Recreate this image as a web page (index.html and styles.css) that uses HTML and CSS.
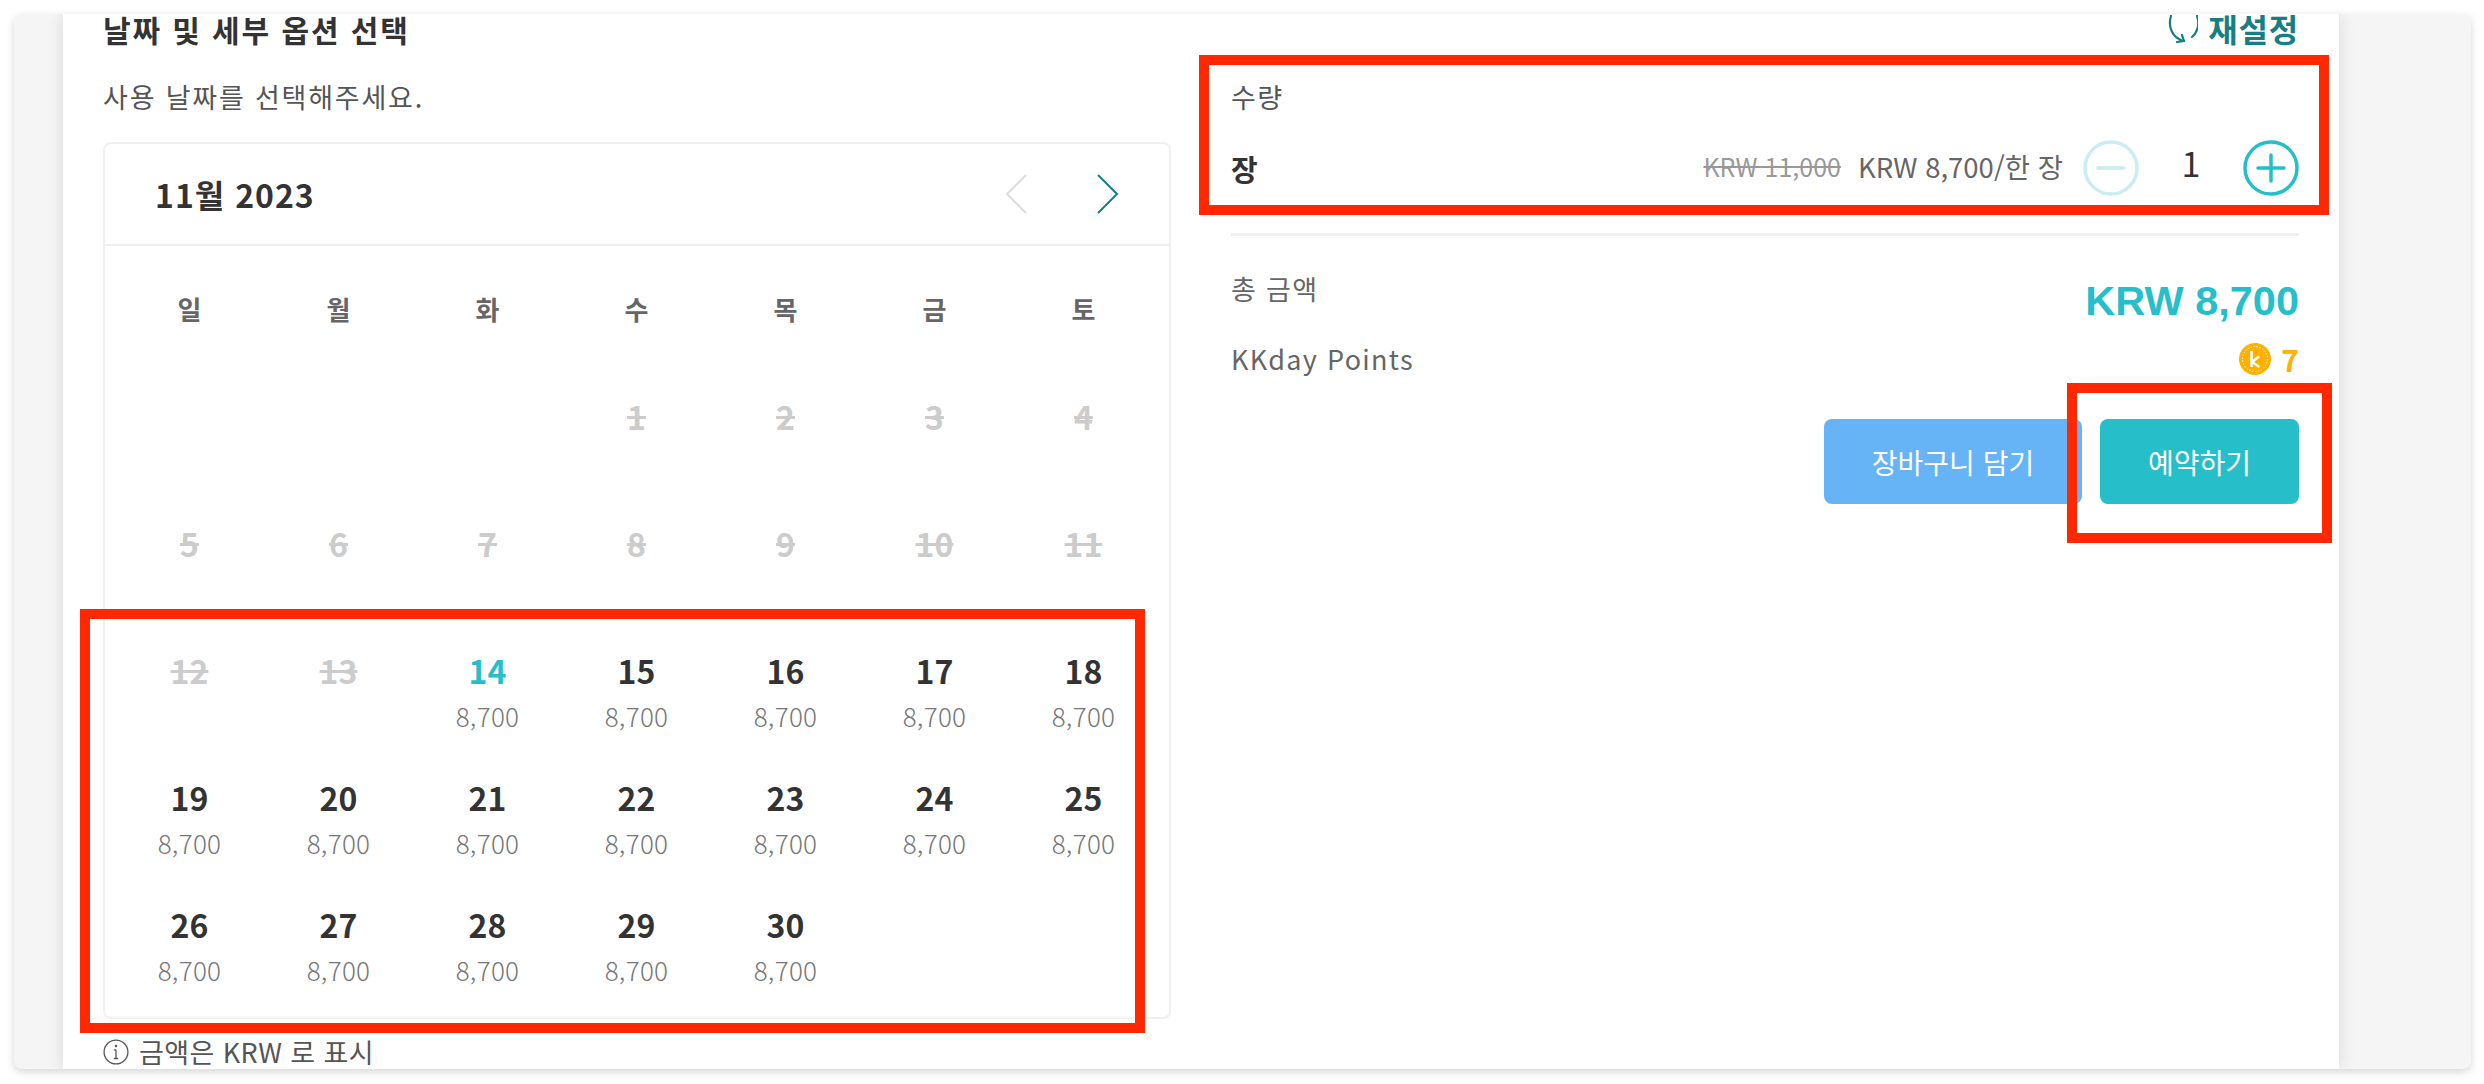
FILE: index.html
```html
<!doctype html>
<html lang="ko">
  <head>
    <meta charset="UTF-8" />
    <title>날짜 및 세부 옵션 선택</title>
    <link rel="stylesheet" href="styles.css">
  </head>
  <body>
    <div class="window">
      <div class="panel">
        <div class="head">
          <h2 class="title">날짜 및 세부 옵션 선택</h2>
          <a class="reset">
            <svg class="reset-icon" viewBox="0 0 30 30" fill="none" stroke="currentColor" stroke-width="2.2" stroke-linecap="round" stroke-linejoin="round">
              <path d="M3 3C0 12 3 25 16 28" />
              <path d="M9 29l7-1-2-6" />
              <path d="M29 3c3 9 0 17-5 21" />
            </svg>
            재설정
          </a>
        </div>

        <div class="cols">
          <div class="col-left">
            <p class="hint">사용 날짜를 선택해주세요.</p>

            <div class="calendar">
              <div class="cal-head">
                <span class="cal-month">11월 2023</span>
                <div class="cal-nav">
                  <svg class="chev chev-off" viewBox="0 0 24 40" fill="none" stroke="currentColor" stroke-width="2">
                    <path d="M22 1 3 20l19 19" />
                  </svg>
                  <svg class="chev" viewBox="0 0 24 40" fill="none" stroke="currentColor" stroke-width="2">
                    <path d="M2 1l19 19L2 39" />
                  </svg>
                </div>
              </div>
              <div class="cal-grid">
                <div class="dow">일</div><div class="dow">월</div><div class="dow">화</div><div class="dow">수</div><div class="dow">목</div><div class="dow">금</div><div class="dow">토</div>

                <div class="day"></div><div class="day"></div><div class="day"></div>
                <div class="day off"><b>1</b></div>
                <div class="day off"><b>2</b></div>
                <div class="day off"><b>3</b></div>
                <div class="day off"><b>4</b></div>

                <div class="day off"><b>5</b></div>
                <div class="day off"><b>6</b></div>
                <div class="day off"><b>7</b></div>
                <div class="day off"><b>8</b></div>
                <div class="day off"><b>9</b></div>
                <div class="day off"><b>10</b></div>
                <div class="day off"><b>11</b></div>

                <div class="day off"><b>12</b></div>
                <div class="day off"><b>13</b></div>
                <div class="day today"><b>14</b><span>8,700</span></div>
                <div class="day"><b>15</b><span>8,700</span></div>
                <div class="day"><b>16</b><span>8,700</span></div>
                <div class="day"><b>17</b><span>8,700</span></div>
                <div class="day"><b>18</b><span>8,700</span></div>

                <div class="day"><b>19</b><span>8,700</span></div>
                <div class="day"><b>20</b><span>8,700</span></div>
                <div class="day"><b>21</b><span>8,700</span></div>
                <div class="day"><b>22</b><span>8,700</span></div>
                <div class="day"><b>23</b><span>8,700</span></div>
                <div class="day"><b>24</b><span>8,700</span></div>
                <div class="day"><b>25</b><span>8,700</span></div>

                <div class="day"><b>26</b><span>8,700</span></div>
                <div class="day"><b>27</b><span>8,700</span></div>
                <div class="day"><b>28</b><span>8,700</span></div>
                <div class="day"><b>29</b><span>8,700</span></div>
                <div class="day"><b>30</b><span>8,700</span></div>
              </div>
            </div>

            <p class="note">
              <svg class="note-icon" viewBox="0 0 24 24" fill="none" stroke="currentColor" stroke-width="1.2">
                <circle cx="12" cy="12" r="11" />
                <path d="M12 10v8M10 18h4M10 10h2" />
                <circle cx="12" cy="6.5" r="0.6" />
              </svg>
              금액은 KRW 로 표시
            </p>
          </div>

          <div class="col-right">
            <div class="qty-label">수량</div>
            <div class="qty-row">
              <b class="qty-name">장</b>
              <div class="qty-right">
                <s class="price-old">KRW 11,000</s>
                <span class="price-now">KRW 8,700/한 장</span>
                <svg class="round round-off" viewBox="0 0 56 56" fill="none" stroke="currentColor" stroke-width="3.5" stroke-linecap="round">
                  <circle cx="28" cy="28" r="26" />
                  <path d="M15 28h26" />
                </svg>
                <span class="qty-num">1</span>
                <svg class="round" viewBox="0 0 56 56" fill="none" stroke="currentColor" stroke-width="3.5" stroke-linecap="round">
                  <circle cx="28" cy="28" r="26" />
                  <path d="M15 28h26M28 15v26" />
                </svg>
              </div>
            </div>

            <hr class="divider" />

            <div class="total-row">
              <span class="row-label">총 금액</span>
              <span class="total">KRW 8,700</span>
            </div>
            <div class="points-row">
              <span class="row-label">KKday Points</span>
              <span class="points">
                <svg class="coin" viewBox="0 0 32 32">
                  <circle cx="16" cy="16" r="16" fill="#ffb000" />
                  <circle cx="16" cy="16" r="12.5" fill="none" stroke="#fff" stroke-width="1" stroke-dasharray="1.5 1.5" />
                  <path d="M12.5 8v16M20 13.5l-7 5.5 7.5 5" fill="none" stroke="#fff" stroke-width="2.6" />
                </svg>
                7
              </span>
            </div>

            <div class="actions">
              <button class="btn btn-cart">장바구니 담기</button>
              <button class="btn btn-book">예약하기</button>
            </div>
          </div>
        </div>
      </div>

      <div class="mark mark-qty"></div>
      <div class="mark mark-book"></div>
      <div class="mark mark-days"></div>
    </div>
  </body>
</html>
```

FILE: styles.css
```css
html,
body {
  margin: 0;
  padding: 0;
  height: 100%;
}

body {
  background: #fff;
  font-family: "Noto Sans CJK KR", "Noto Sans", sans-serif;
  color: #333;
  overflow: hidden;
}

.window {
  position: relative;
  box-sizing: border-box;
  width: 2457px;
  height: 1055px;
  margin: 14px 0 0 14px;
  background: #f5f5f5;
  border-radius: 8px;
  box-shadow: 0 3px 8px rgba(0, 0, 0, 0.16);
  overflow: hidden;
}

.panel {
  box-sizing: border-box;
  width: 2276px;
  height: 100%;
  margin-left: 49px;
  padding: 0 40px;
  background: #fff;
  box-shadow: 0 0 16px rgba(0, 0, 0, 0.12);
}

.head {
  display: flex;
  justify-content: space-between;
  align-items: center;
  height: 30px;
}

.title {
  margin: 0;
  font-size: 30px;
  font-weight: 700;
  letter-spacing: 1.9px;
  line-height: 30px;
  color: #333;
}

.reset {
  display: flex;
  align-items: center;
  gap: 10px;
  font-size: 32px;
  font-weight: 700;
  letter-spacing: 0.8px;
  line-height: 30px;
  margin-top: -2px;
  color: #167f83;
}

.reset-icon {
  width: 30px;
  height: 30px;
}

.cols {
  display: flex;
  gap: 60px;
}

.col-left {
  width: 1068px;
  flex: none;
}

.col-right {
  flex: 1;
  padding-top: 35px;
}

.hint {
  margin: 35px 0 0;
  font-size: 27px;
  line-height: 36px;
  letter-spacing: 1.8px;
  color: #555;
}

.calendar {
  margin-top: 27px;
  border: 2px solid #f0f0f0;
  border-radius: 8px;
  height: 877px;
  box-sizing: border-box;
}

.cal-head {
  display: flex;
  justify-content: space-between;
  align-items: center;
  box-sizing: border-box;
  height: 102px;
  padding: 0 49px 0 50px;
  border-bottom: 2px solid #f0f0f0;
}

.cal-month {
  font-size: 32px;
  font-weight: 700;
  letter-spacing: 1px;
}

.cal-nav {
  display: flex;
  gap: 68px;
}

.chev {
  width: 24px;
  height: 40px;
  color: #167f83;
}

.chev-off {
  color: #ddd;
}

.cal-grid {
  display: grid;
  grid-template-columns: repeat(7, 149px);
  grid-auto-rows: 127px;
  padding: 0 10px;
  text-align: center;
}

.dow {
  padding-top: 45px;
  box-sizing: border-box;
  font-size: 26px;
  font-weight: 700;
  line-height: 36px;
  color: #666;
}

.day {
  display: flex;
  flex-direction: column;
  align-items: center;
  padding-top: 20px;
}

.day b {
  font-size: 32px;
  font-weight: 700;
  line-height: 46px;
}

.day span {
  margin-top: 5px;
  font-size: 26px;
  font-weight: 300;
  letter-spacing: 0.3px;
  line-height: 36px;
  color: #777;
}

.day.off b {
  color: #ccc;
  text-decoration: line-through;
}

.day.today b {
  color: #26bec9;
}

.note {
  display: flex;
  align-items: center;
  gap: 10px;
  margin: 17px 0 0;
  font-size: 27px;
  line-height: 32px;
  letter-spacing: 0.4px;
  color: #555;
}

.note-icon {
  width: 26px;
  height: 26px;
}

.qty-label {
  font-size: 27px;
  line-height: 36px;
  letter-spacing: 1.5px;
  color: #555;
}

.qty-row {
  display: flex;
  justify-content: space-between;
  align-items: center;
  margin-top: 25px;
  height: 56px;
}

.qty-name {
  font-size: 29px;
  font-weight: 700;
}

.qty-right {
  display: flex;
  align-items: center;
}

.price-old {
  font-size: 25px;
  color: #999;
  margin-right: 17px;
  margin-top: -5px;
}

.price-now {
  font-size: 27.5px;
  color: #666;
  margin-right: 20px;
  margin-top: -5px;
}

.round {
  width: 56px;
  height: 56px;
  color: #26bec9;
}

.round-off {
  color: #c9edf0;
}

.qty-num {
  width: 104px;
  text-align: center;
  font-size: 34px;
  line-height: 44px;
  margin-top: -10px;
}

.divider {
  height: 3px;
  margin: 37px 0 0;
  border: none;
  background: #f0f0f0;
}

.total-row {
  display: flex;
  justify-content: space-between;
  align-items: flex-start;
  margin-top: 35px;
}

.row-label {
  font-size: 27px;
  line-height: 36px;
  letter-spacing: 1.3px;
  color: #666;
}

.total {
  font-family: "Liberation Sans", sans-serif;
  font-size: 41.5px;
  font-weight: 700;
  line-height: 54px;
  color: #26bec9;
  margin-top: 3px;
}

.points-row {
  display: flex;
  justify-content: space-between;
  align-items: center;
  margin-top: 9px;
}

.points {
  display: flex;
  align-items: center;
  gap: 10px;
  font-size: 30px;
  font-weight: 700;
  color: #ffb000;
}

.coin {
  width: 32px;
  height: 32px;
}

.actions {
  display: flex;
  justify-content: flex-end;
  gap: 18px;
  margin-top: 38px;
}

.btn {
  height: 85px;
  border: none;
  border-radius: 8px;
  font-family: inherit;
  font-size: 28px;
  color: #fff;
}

.btn-cart {
  width: 258px;
  background: #66b3f5;
}

.btn-book {
  width: 199px;
  background: #26bec9;
}

.mark {
  position: absolute;
  box-sizing: border-box;
  border: 10px solid #ff2800;
}

.mark-qty {
  left: 1185px;
  top: 41px;
  width: 1130px;
  height: 160px;
}

.mark-book {
  left: 2053px;
  top: 369px;
  width: 265px;
  height: 160px;
}

.mark-days {
  left: 66px;
  top: 595px;
  width: 1065px;
  height: 424px;
}
```
